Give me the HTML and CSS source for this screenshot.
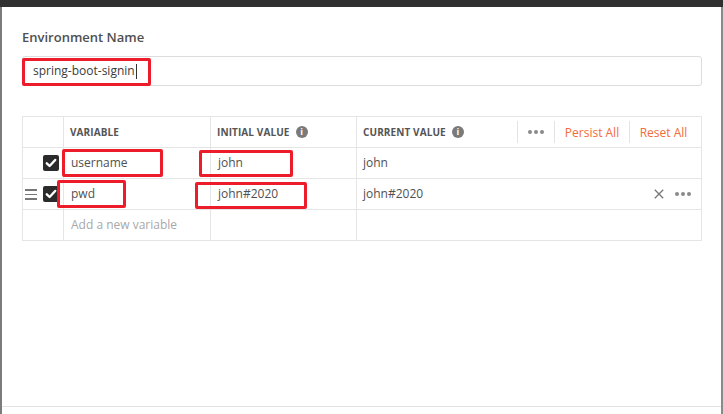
FILE: index.html
```html
<!DOCTYPE html>
<html>
<head>
<meta charset="utf-8">
<link rel="stylesheet" href="styles.css">
</head>
<body>
<div class="page">
  <div class="topbar"></div>
  <div class="frame">
    <div class="modal">
      <div class="label">Environment Name</div>
      <div class="input"><span class="input-text">spring-boot-signin</span><span class="caret"></span></div>

      <div class="table">
        <div class="row head">
          <div class="cell c1"></div>
          <div class="cell c2"><span class="th">VARIABLE</span></div>
          <div class="cell c3"><span class="th">INITIAL VALUE</span><span class="info">i</span></div>
          <div class="cell c4">
            <span class="th">CURRENT VALUE</span><span class="info">i</span>
            <span class="spacer"></span>
            <span class="act act-dots"><span class="dots"><i></i><i></i><i></i></span></span>
            <span class="act act-persist">Persist All</span>
            <span class="act act-reset">Reset All</span>
          </div>
        </div>
        <div class="row">
          <div class="cell c1"><span class="check"><svg width="16" height="16" viewBox="0 0 16 16"><path d="M3.8 8.3 L6.6 11 L12.2 5" fill="none" stroke="#fff" stroke-width="2.4" stroke-linecap="round" stroke-linejoin="round"/></svg></span></div>
          <div class="cell c2"><span class="td">username</span></div>
          <div class="cell c3"><span class="td">john</span></div>
          <div class="cell c4"><span class="td">john</span></div>
        </div>
        <div class="row">
          <div class="cell c1">
            <span class="drag"><i></i><i></i><i></i></span>
            <span class="check"><svg width="16" height="16" viewBox="0 0 16 16"><path d="M3.8 8.3 L6.6 11 L12.2 5" fill="none" stroke="#fff" stroke-width="2.4" stroke-linecap="round" stroke-linejoin="round"/></svg></span>
          </div>
          <div class="cell c2"><span class="td">pwd</span></div>
          <div class="cell c3"><span class="td">john#2020</span></div>
          <div class="cell c4">
            <span class="td">john#2020</span>
            <span class="spacer"></span>
            <svg class="xicon" width="10" height="10" viewBox="0 0 10 10"><path d="M0.8 0.8 L9.2 9.2 M9.2 0.8 L0.8 9.2" stroke="#777" stroke-width="1.3"/></svg>
            <span class="dots row-dots"><i></i><i></i><i></i></span>
          </div>
        </div>
        <div class="row">
          <div class="cell c1"></div>
          <div class="cell c2"><span class="td placeholder">Add a new variable</span></div>
          <div class="cell c3"></div>
          <div class="cell c4"></div>
        </div>
      </div>
    </div>
  </div>

  <div class="mark m-name"></div>
  <div class="mark m-user"></div>
  <div class="mark m-john"></div>
  <div class="mark m-pwd"></div>
  <div class="mark m-john2"></div>
</div>
</body>
</html>
```

FILE: styles.css
```css
* { box-sizing: border-box; }
html, body { margin: 0; padding: 0; background: #fff; }
body { font-family: "Open Sans", "DejaVu Sans", sans-serif; color: #505050; }

.page { position: relative; width: 723px; height: 414px; overflow: hidden; }

.topbar { height: 7px; background: #303030; }

.frame {
  height: 407px;
  border-left: 2px solid #7c7c7c;
  border-right: 2px solid #8a8a8a;
}

.modal {
  height: 400px;
  padding: 0 19px 0 20px;
  border-bottom: 1px solid #e3e3e3;
}

.label {
  padding-top: 21px;
  height: 49px;
  font-size: 13px;
  font-weight: 600;
  line-height: 18px;
  color: #505050;
}

.input {
  height: 30px;
  border: 1px solid #dcdcdc;
  border-radius: 3px;
  display: flex;
  align-items: center;
  padding-left: 10px;
}
.input-text { font-size: 12px; color: #3a3a3a; line-height: 16px; }
.caret { display: inline-block; width: 1px; height: 15px; background: #333; margin-left: 1px; }

.table {
  margin-top: 30px;
  border: 1px solid #e5e5e5;
}
.row {
  display: flex;
  height: 31px;
  border-bottom: 1px solid #e5e5e5;
}
.row:last-child { border-bottom: none; height: 30px; }

.cell {
  display: flex;
  align-items: center;
  border-right: 1px solid #e5e5e5;
  height: 100%;
}
.c1 { width: 41px; justify-content: flex-end; padding-right: 4px; position: relative; }
.c2 { width: 147px; }
.c3 { width: 146px; }
.c4 { flex: 1; border-right: none; }

.head .c2, .head .c3, .head .c4 { padding-left: 6px; }
.th {
  font-size: 10px;
  font-weight: 700;
  color: #555;
  letter-spacing: 0.1px;
  line-height: 14px;
}
.info {
  display: inline-flex;
  align-items: center;
  justify-content: center;
  width: 12px;
  height: 12px;
  border-radius: 50%;
  background: #7a7a7a;
  color: #fff;
  font-size: 9px;
  font-weight: 700;
  line-height: 12px;
  margin-left: 6px;
}
.spacer { flex: 1; }

.act {
  display: flex;
  align-items: center;
  justify-content: center;
  height: 22px;
  border-left: 1px solid #e3e3e3;
  font-size: 12px;
  color: #f26b3a;
}
.act-dots { width: 37px; }
.act-persist { width: 75px; }
.act-reset { width: 72px; padding-right: 4px; }

.dots { display: inline-flex; gap: 2px; }
.dots i { display: block; width: 4px; height: 4px; border-radius: 50%; background: #8a8a8a; }

.td { font-size: 12px; line-height: 16px; color: #505050; padding-left: 7px; }
.c4 .td { padding-left: 6px; }
.placeholder { color: #a8a8a8; }

.check {
  display: block;
  width: 16px;
  height: 16px;
  border-radius: 2px;
  background: #2b2b2b;
}
.check svg { display: block; }

.drag {
  position: absolute;
  left: 2px;
  top: 10px;
  display: flex;
  flex-direction: column;
  gap: 3px;
}
.drag i { display: block; width: 12px; height: 1.5px; background: #777; }

.xicon { margin-right: 11px; }
.row-dots { margin-right: 10px; }

.mark {
  position: absolute;
  border: 3px solid #ec1c2b;
  border-radius: 2px;
}
.m-name { left: 22px; top: 58px; width: 129px; height: 28px; }
.m-user { left: 62px; top: 149px; width: 101px; height: 28px; }
.m-john { left: 199px; top: 150px; width: 94px; height: 27px; }
.m-pwd { left: 57px; top: 180px; width: 69px; height: 28px; }
.m-john2 { left: 195px; top: 182px; width: 112px; height: 27px; }
```
